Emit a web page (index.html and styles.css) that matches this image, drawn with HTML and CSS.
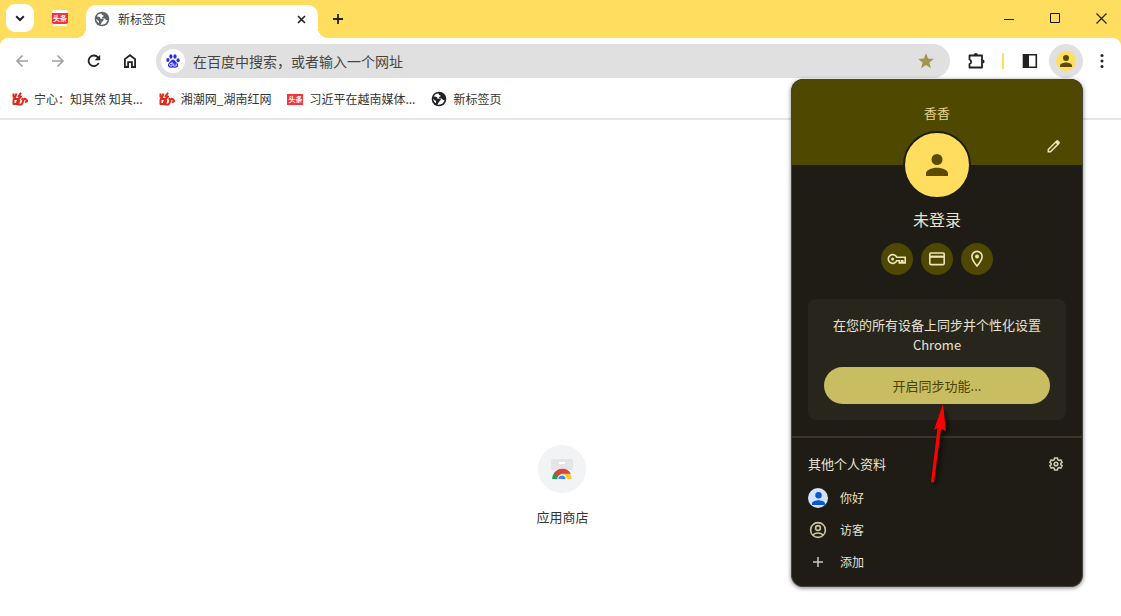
FILE: index.html
```html
<!DOCTYPE html>
<html lang="zh-CN">
<head>
<meta charset="utf-8">
<title>新标签页</title>
<link rel="stylesheet" href="styles.css">
</head>
<body>
<svg class="defs" aria-hidden="true">
  <symbol id="person" viewBox="4 4 16 16"><path d="M12 12a4 4 0 1 0 0-8 4 4 0 0 0 0 8zm0 2c-2.700 0-8 1.300-8 4v2h16v-2c0-2.700-5.300-4-8-4z"/></symbol>
  <symbol id="globe" viewBox="0 0 16 16"><circle cx="8" cy="8" r="7.300"/><path fill="#fff" d="M7.500 2.600C5.500 2.500 3.600 3.600 2.800 5.400c1.400.2 2.400 0 3.200.9.700.8-.3 1.300.9 1.500 1.300.1 2.800-.4 2.900.9.100.9-1.300.7-1.400 1.700-.1 1-1.300 1-1.300 1.900 0 .7-.3.900-.8 1.100 3.400 1 6.500-1 7.300-4.400-1 .3-1.800-.1-2.200-.8-.5-.9-1.600-.5-2.500-.7-1-.3-1.100-1-.5-1.600.6-.6 1.400-.4 1.300-1.200-.1-.7-1.600-.3-1.700-1z"/><path fill="#fff" d="M2.200 7.800c.1 1.900 1 3.400 2.600 4.400.4-.8.500-1.500.1-2.200-.6-.8-1.300-.6-1.700-1.300z"/></symbol>
  <symbol id="rednet" viewBox="0 0 16 14"><path fill="none" stroke="#dc2a1c" stroke-width="2" stroke-linejoin="round" d="M1.500 1.500v4M3.500 4 1.500 8v4h3M4.500 1.500 2.500 7h4M9 .7 6.500 4.500H9L5.500 9 4 13M7.500 8 6 12.500h3.500L11 10M9.500 6.500l2 1-1 3.500M12 6.500c2 .5 3 2 3.500 2.500L13 10.500"/></symbol>
</svg>

<header class="tabstrip">
  <button class="tab-search" aria-label="搜索标签页"><svg width="10" height="7" viewBox="0 0 10 7"><path d="m1.200 1.200 3.800 3.800 3.800-3.800" fill="none" stroke="#222" stroke-width="2"/></svg></button>
  <button class="pinned" aria-label="头条"><span class="toutiao">头条</span></button>
  <div class="tab">
    <svg class="tab-icon" width="16" height="16"><use href="#globe"/></svg>
    <span class="tab-title">新标签页</span>
    <button class="plain" aria-label="关闭"><svg width="9" height="9" viewBox="0 0 9 9"><path d="m1 1 7 7m0-7L1 8" stroke="#222" stroke-width="1.600"/></svg></button>
  </div>
  <button class="plain new-tab" aria-label="打开新标签页"><svg width="12" height="12" viewBox="0 0 12 12"><path d="M6 1v10M1 6h10" stroke="#222" stroke-width="1.800"/></svg></button>
  <div class="window-buttons">
    <button aria-label="最小化"><svg width="11" height="11" viewBox="0 0 11 11"><path d="M0 6.500h10" stroke="#222"/></svg></button>
    <button aria-label="最大化"><svg width="11" height="11" viewBox="0 0 11 11"><path d="M.5.5h9v9h-9z" fill="none" stroke="#111"/></svg></button>
    <button aria-label="关闭窗口"><svg width="11" height="11" viewBox="0 0 11 11"><path d="m.5.500 10 10m0-10-10 10" stroke="#222" stroke-width="1.200"/></svg></button>
  </div>
</header>

<div class="toolbar-back">
<nav class="toolbar">
  <button class="tool" aria-label="后退"><svg width="14" height="14" viewBox="0 0 14 14"><path d="M13 7H2m5.500-5.500L2 7l5.500 5.500" fill="none" stroke="#a0a0a0" stroke-width="1.600"/></svg></button>
  <button class="tool" aria-label="前进"><svg width="14" height="14" viewBox="0 0 14 14"><path d="M1 7h11M6.500 1.500 12 7l-5.500 5.500" fill="none" stroke="#a0a0a0" stroke-width="1.600"/></svg></button>
  <button class="tool" aria-label="重新加载"><svg width="14" height="14" viewBox="0 0 14 14"><path d="M11.700 9A5.300 5.300 0 1 1 11 3.500L12.500 5" fill="none" stroke="#222" stroke-width="1.800"/><path d="M13.200.7v5.500H7.700z" fill="#222"/></svg></button>
  <button class="tool" aria-label="主页"><svg width="14" height="16" viewBox="0 0 14 16"><path d="M1.900 6.100 7 2.200l5.100 3.900V14H8.900V9.200H5.100V14H1.900z" fill="none" stroke="#222" stroke-width="1.800"/></svg></button>
  <div class="omnibox">
    <span class="engine"><svg width="14" height="14" viewBox="0 0 14 14" fill="#2a2ee0"><ellipse cx="1.900" cy="6" rx="1.600" ry="2"/><ellipse cx="4.900" cy="2.500" rx="1.600" ry="2.200"/><ellipse cx="9" cy="2.500" rx="1.600" ry="2.200"/><ellipse cx="12.100" cy="6.200" rx="1.600" ry="2"/><path d="M7 5.600c-1.500 0-2 1.500-3.400 2.700-1.600 1.300-2 2.500-1.400 4 .7 1.700 2.700 1.500 4.800 1.200 2.100.3 4.300.5 4.900-1.200.5-1.500 0-2.600-1.500-4C9 7.100 8.500 5.600 7 5.600z"/><path d="M6.100 8v4H4.800a1 1 0 0 1 0-2.500h1.300M7.700 9.500V12h2.500V9.500" fill="none" stroke="#fff" stroke-width=".8"/></svg></span>
    <input class="address" type="text" aria-label="地址栏" placeholder="在百度中搜索，或者输入一个网址">
    <button class="plain" aria-label="收藏"><svg width="16" height="16" viewBox="0 0 16 16"><path d="m8 .3 2.100 5.300 5.700.3-4.400 3.600 1.500 5.800L8 12.100l-4.900 3.200 1.500-5.800L.2 5.900l5.700-.3z" fill="#9f9750"/></svg></button>
  </div>
  <button class="tool extensions" aria-label="扩展程序"><svg width="18" height="18" viewBox="0 0 18 18"><path d="M2.500 3.500h12.500V15.500H2.500v-3.300c2.200-.8 2.200-3.900 0-4.700z" fill="none" stroke="#202124" stroke-width="1.800" stroke-linejoin="round"/><path d="M6.700 3a2.100 2.100 0 0 1 4.200 0zM15.500 7.400a2.100 2.100 0 0 1 0 4.200z" fill="#202124"/></svg></button>
  <span class="separator"></span>
  <button class="tool side" aria-label="侧边栏"><svg width="16" height="16" viewBox="0 0 16 16"><path d="M1.500 1.800h12.800v12.400H1.500z" fill="none" stroke="#202124" stroke-width="1.600"/><path d="M1 1h6v14H1z" fill="#202124"/></svg></button>
  <button class="profile" aria-label="个人资料"><span class="profile-face"><svg width="12" height="12"><use href="#person"/></svg></span></button>
  <button class="tool more" aria-label="更多"><svg width="4" height="16" viewBox="0 0 4 16" fill="#202124"><circle cx="2" cy="2.500" r="1.500"/><circle cx="2" cy="8" r="1.500"/><circle cx="2" cy="13.500" r="1.500"/></svg></button>
</nav>
</div>

<nav class="bookmarks">
  <a href="#"><svg width="16" height="14"><use href="#rednet"/></svg>宁心：知其然 知其...</a>
  <a href="#"><svg width="16" height="14"><use href="#rednet"/></svg>湘潮网_湖南红网</a>
  <a href="#"><span class="toutiao">头条</span>习近平在越南媒体...</a>
  <a href="#" class="dark-globe"><svg width="16" height="16"><use href="#globe"/></svg>新标签页</a>
</nav>

<main class="page">
  <a href="#" class="shortcut">
    <span class="shortcut-icon"><svg width="24" height="24" viewBox="0 0 24 24"><path d="M1 2h22v11H1z" fill="#e4e5e6"/><path d="M9 5h6v2H9z" fill="#fff"/><path d="M2.200 22a9.800 9.800 0 0 1 4.200-8l3.800 8z" fill="#1e9e57"/><path d="M21.800 22a9.800 9.800 0 0 0-2.600-6H12v6z" fill="#fbc934"/><path d="M3.900 16.500a9.800 9.800 0 0 1 17 .2H12l-4 3z" fill="#dc4437"/><path d="M7.300 22a4.700 4.700 0 0 1 9.400 0z" fill="#fff"/><path d="M8.400 22a3.600 3.600 0 0 1 7.200 0z" fill="#4285f4"/></svg></span>
    <span>应用商店</span>
  </a>
</main>

<section class="popup" aria-label="个人资料菜单">
  <div class="banner">
    <span class="profile-name">香香</span>
    <button class="plain edit" aria-label="修改"><svg width="14" height="14" viewBox="0 0 14 14"><path d="M1.300 12.700v-2.200l8.300-8.300c.4-.4.900-.4 1.300 0l.9.900c.4.400.4.900 0 1.300l-8.300 8.300z" fill="none" stroke="#ece5bd" stroke-width="1.500"/><path d="m8.300 3.400 2.300 2.300 1.600-1.600-2.300-2.300z" fill="#ece5bd"/></svg></button>
  </div>
  <div class="avatar"><svg width="22" height="22"><use href="#person"/></svg></div>
  <h1>未登录</h1>
  <div class="quick">
    <button aria-label="密码"><svg width="20" height="12" viewBox="0 0 20 12"><path d="M9.700 4.300a4.400 4.400 0 1 0 0 3.400h2.600v2.200h2.200V7.700h1.300v2.200h2.400V4.300z" fill="none" stroke="#ece5bd" stroke-width="1.600"/><circle cx="5.600" cy="6" r="1.500" fill="#ece5bd"/></svg></button>
    <button aria-label="付款"><svg width="16" height="14" viewBox="0 0 16 14"><rect x=".8" y="1" width="14.400" height="11.600" rx="1" fill="none" stroke="#ece5bd" stroke-width="1.600"/><path d="M1 4.700h14" stroke="#ece5bd" stroke-width="2.200"/></svg></button>
    <button aria-label="地址"><svg width="14" height="18" viewBox="0 0 14 18"><path d="M7 16C4 12.500 1.900 9.600 1.900 6.500a5.100 5.100 0 0 1 10.200 0C12.100 9.600 10 12.500 7 16z" fill="none" stroke="#ece5bd" stroke-width="1.600"/><circle cx="7" cy="6.500" r="2" fill="#ece5bd"/></svg></button>
  </div>
  <div class="sync">
    <p>在您的所有设备上同步并个性化设置 Chrome</p>
    <button class="sync-button">开启同步功能...</button>
  </div>
  <div class="others">
    <div class="others-head">
      <h2>其他个人资料</h2>
      <button class="plain" aria-label="管理个人资料"><svg width="16" height="16" viewBox="0 0 16 16" fill="none" stroke="#c9c6b4" stroke-width="1.600"><path d="M6.600 2h2.800l.4 1.800 1.200.7 1.800-.6 1.300 2.300-1.300 1.100v1.400l1.300 1.100-1.300 2.300-1.800-.6-1.200.7-.4 1.800H6.600l-.4-1.800-1.200-.7-1.800.6-1.300-2.300 1.300-1.100V7.300L1.900 6.200l1.300-2.300 1.800.6 1.200-.7z"/><circle cx="8" cy="8" r="1.800"/></svg></button>
    </div>
    <button class="row"><span class="row-icon blue"><svg width="13" height="13"><use href="#person"/></svg></span>你好</button>
    <button class="row"><span class="row-icon"><svg width="18" height="18" viewBox="0 0 18 18" fill="none" stroke="#cbc5a2" stroke-width="1.600"><circle cx="9" cy="9" r="7.400"/><circle cx="9" cy="7" r="2.400"/><path d="M3.800 14c2.600-2.600 7.800-2.600 10.400 0"/></svg></span>访客</button>
    <button class="row"><span class="row-icon"><svg width="10" height="10" viewBox="0 0 10 10"><path d="M5 0v10M0 5h10" stroke="#cbc8b6" stroke-width="1.500"/></svg></span>添加</button>
  </div>
  <svg class="arrow" width="24" height="84" viewBox="0 0 24 84"><path d="M15 0 18 27 13 24.500 6 78.500 3 78 9.500 24 6 26z" fill="#f00"/></svg>
</section>
</body>
</html>
```
FILE: styles.css
```css
* { box-sizing: border-box; }
body {
  margin: 0;
  min-height: 100vh;
  position: relative;
  display: flex;
  flex-direction: column;
  background: #fff;
  color: #333;
  font: 12px/16px "Noto Sans CJK SC", "Noto Sans", sans-serif;
}
svg { display: block; flex: none; }
.defs { position: absolute; width: 0; height: 0; }
a { color: inherit; text-decoration: none; }
button {
  display: flex;
  align-items: center;
  justify-content: center;
  padding: 0;
  border: 0;
  background: none;
  color: inherit;
  font: inherit;
}
h1, h2, p { margin: 0; font-weight: 400; }

.tabstrip {
  display: flex;
  align-items: flex-start;
  height: 38px;
  padding-left: 6px;
  background: #ffdd5e;
}
.tab-search {
  width: 28px;
  height: 28px;
  margin-top: 4px;
  border-radius: 9px;
  background: #fff;
}
.pinned { width: 52px; height: 36px; }
.toutiao {
  flex: none;
  width: 16px;
  height: 11px;
  background: #f5333b;
  color: #fff;
  font-size: 7px;
  line-height: 10px;
  font-weight: 700;
  text-align: center;
  white-space: nowrap;
}
.pinned .toutiao {
  box-sizing: content-box;
  border: solid #fff;
  border-width: 3px 0 2px;
  border-radius: 3px;
}
.tab {
  position: relative;
  display: flex;
  align-items: center;
  gap: 8px;
  width: 232px;
  height: 33px;
  margin-top: 5px;
  padding: 0 12px 5px 8px;
  border-radius: 10px 10px 0 0;
  background: #fff;
}
.tab::before, .tab::after {
  content: "";
  position: absolute;
  bottom: 0;
  width: 10px;
  height: 10px;
}
.tab::before { right: 100%; background: radial-gradient(circle at 0 0, transparent 10px, #fff 10px); }
.tab::after { left: 100%; background: radial-gradient(circle at 100% 0, transparent 10px, #fff 10px); }
.tab-icon { fill: #5f6368; }
.tab-title { flex: 1; }
.new-tab { width: 40px; height: 37px; }
.window-buttons { display: flex; gap: 6px; margin-left: auto; }
.window-buttons button { width: 40px; height: 36px; }

.toolbar-back { background: #ffdd5e; }
.toolbar {
  display: flex;
  align-items: center;
  height: 46px;
  padding: 0 1px 0 4px;
  border-radius: 8px 8px 0 0;
  background: #fff;
}
.tool { flex: none; width: 36px; height: 34px; }
.omnibox {
  flex: 1;
  display: flex;
  align-items: center;
  height: 34px;
  margin-left: 8px;
  padding: 0 16px 0 5px;
  border-radius: 17px;
  background: #e0e0e0;
}
.engine {
  display: flex;
  align-items: center;
  justify-content: center;
  width: 24px;
  height: 24px;
  border-radius: 50%;
  background: #fff;
}
.address {
  flex: 1;
  min-width: 0;
  padding: 0 8px;
  border: 0;
  outline: 0;
  background: none;
  font: 14px/20px "Noto Sans CJK SC", sans-serif;
}
.address::placeholder { color: #444; opacity: 1; }
.extensions { margin-left: 8px; }
.separator { width: 2px; height: 16px; margin: 0 8px; background: #ffdd5e; }
.profile {
  flex: none;
  width: 34px;
  height: 34px;
  margin: 0 1px;
  border-radius: 50%;
  background: #e0e0e0;
}
.profile-face {
  display: flex;
  align-items: center;
  justify-content: center;
  width: 20px;
  height: 20px;
  border-radius: 50%;
  background: #ffdd5e;
  fill: #5c4a00;
}

.bookmarks {
  display: flex;
  gap: 16px;
  height: 36px;
  padding: 0 12px 4px;
  border-bottom: 2px solid #e5e5e5;
}
.bookmarks a {
  display: flex;
  align-items: center;
  gap: 6px;
  white-space: nowrap;
}
.dark-globe { fill: #202124; }

.page {
  flex: 1;
  display: flex;
  justify-content: center;
  align-items: flex-end;
  padding: 0 0 91px 4px;
}
.shortcut {
  display: flex;
  flex-direction: column;
  align-items: center;
  gap: 16px;
  font-size: 13px;
}
.shortcut-icon {
  display: flex;
  align-items: center;
  justify-content: center;
  width: 48px;
  height: 48px;
  border-radius: 50%;
  background: #f1f3f4;
}

.popup {
  position: absolute;
  top: 79px;
  right: 38px;
  width: 292px;
  border: 1px solid #45443c;
  border-top: 0;
  border-radius: 12px;
  background: #1e1c15;
  color: #e8e3d4;
  box-shadow: 0 1px 4px rgb(0 0 0 / 50%);
  font-size: 13px;
  line-height: 20px;
}
.banner {
  display: grid;
  align-content: start;
  justify-items: center;
  gap: 16px;
  height: 86px;
  padding-top: 24px;
  border-radius: 12px 12px 0 0;
  background: #4f4800;
}
.profile-name { color: #e2d895; }
.edit { justify-self: end; margin-right: 21px; }
.avatar {
  display: flex;
  align-items: center;
  justify-content: center;
  width: 68px;
  height: 68px;
  margin: -34px auto 0;
  border: 2px solid #1e1c15;
  border-radius: 50%;
  background: #ffdd5e;
  fill: #5c4a00;
  position: relative;
}
h1 { margin-top: 8px; font-size: 16px; line-height: 24px; text-align: center; }
.quick {
  display: flex;
  justify-content: center;
  gap: 8px;
  margin-top: 12px;
}
.quick button {
  width: 32px;
  height: 32px;
  border-radius: 50%;
  background: #4f4800;
}
.sync {
  margin: 24px 16px 16px;
  padding: 16px;
  border-radius: 8px;
  background: #28261c;
  text-align: center;
}
.sync-button {
  width: 100%;
  height: 37px;
  margin-top: 12px;
  border-radius: 19px;
  background: #c9bd62;
  color: #4a4300;
}
.others { padding: 16px 16px 8px; border-top: 2px solid #3a3524; }
.others-head {
  display: flex;
  align-items: center;
  justify-content: space-between;
  padding-right: 2px;
  margin-bottom: 8px;
}
h2 { font-size: 13px; }
.row {
  justify-content: flex-start;
  gap: 12px;
  width: 100%;
  height: 32px;
  font-size: 12px;
}
.row-icon {
  display: flex;
  align-items: center;
  justify-content: center;
  width: 20px;
  height: 20px;
}
.blue { border-radius: 50%; background: #d3e3fd; fill: #0b57d0; }
.arrow {
  position: absolute;
  top: 325px;
  left: 136px;
  filter: drop-shadow(3px 3px 2px rgb(0 0 0 / 60%));
}
```
